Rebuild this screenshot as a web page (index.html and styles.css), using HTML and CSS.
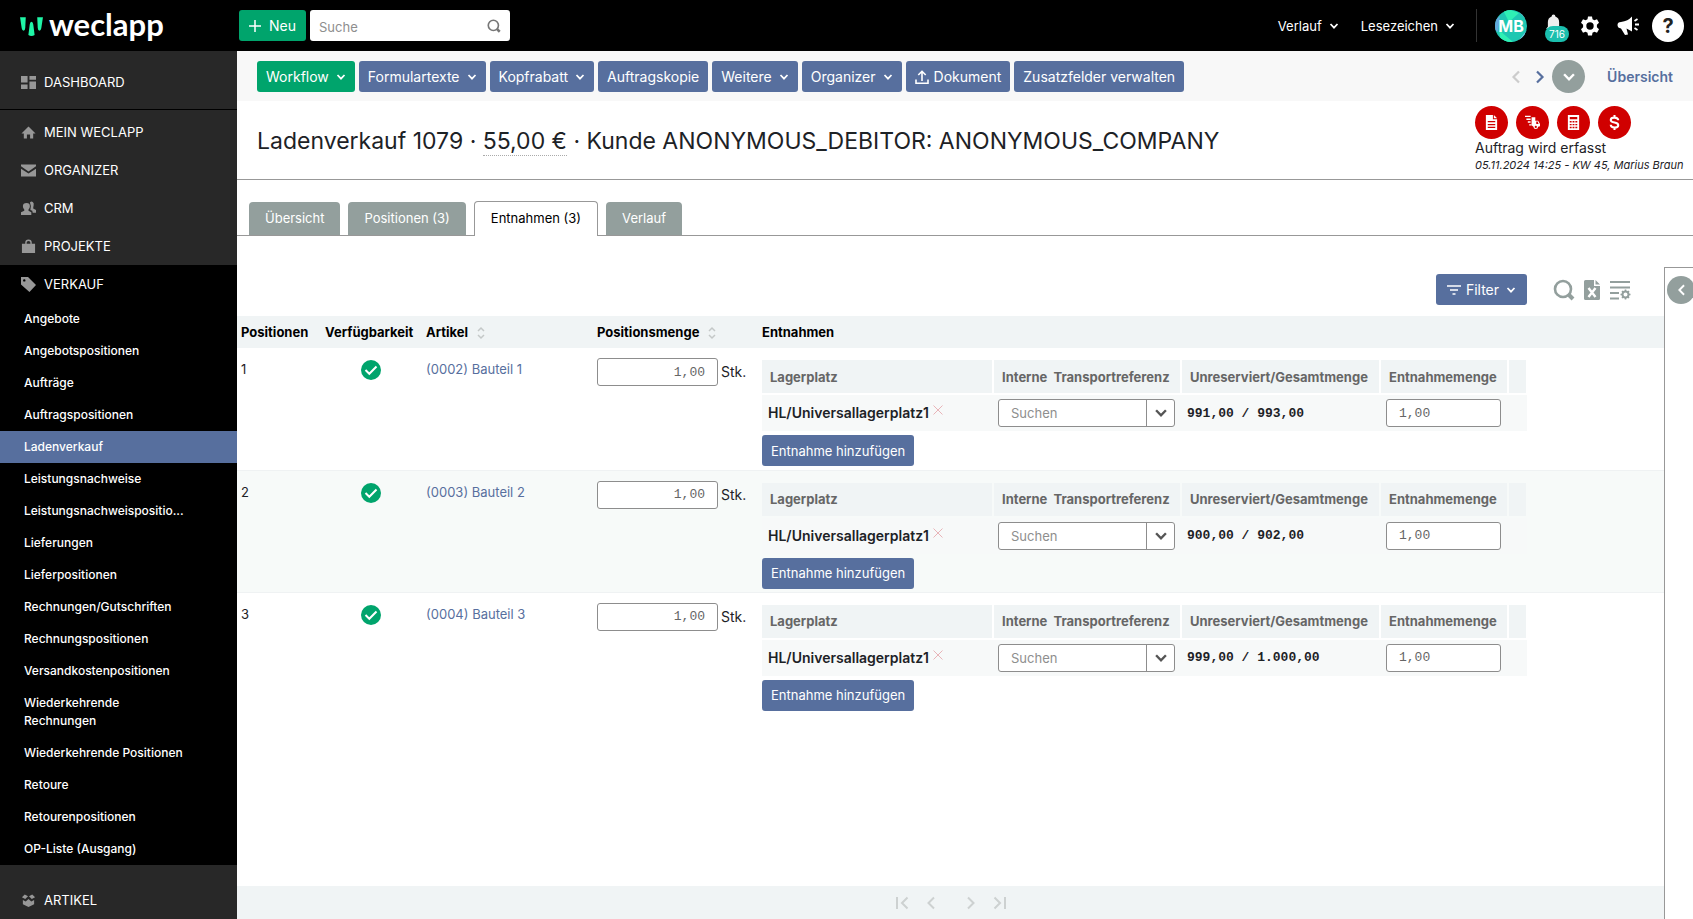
FILE: index.html
```html
<!DOCTYPE html>
<html lang="de">
<head>
<meta charset="utf-8">
<title>Ladenverkauf 1079 - weclapp</title>
<link rel="stylesheet" href="styles.css">
</head>
<body>
<svg class="sprite" aria-hidden="true">
  <symbol id="chev" viewBox="0 0 10 10"><path d="M1.5 3 5 6.700 8.500 3" fill="none" stroke="currentColor" stroke-width="1.700"/></symbol>
  <symbol id="chev-left" viewBox="0 0 10 14"><path d="M8 1.500 2.500 7 8 12.500" fill="none" stroke="currentColor" stroke-width="2.200"/></symbol>
  <symbol id="chev-right" viewBox="0 0 10 14"><path d="M2 1.500 7.500 7 2 12.500" fill="none" stroke="currentColor" stroke-width="2.200"/></symbol>
  <symbol id="sort" viewBox="0 0 10 14"><path d="M2 5 5 2 8 5M2 9l3 3 3-3" fill="none" stroke="currentColor" stroke-width="1.500"/></symbol>
  <symbol id="lens" viewBox="0 0 22 22"><circle cx="10" cy="10" r="8" fill="none" stroke="currentColor" stroke-width="2.600"/><path d="m15.500 15.500 4.500 4.500" stroke="currentColor" stroke-width="4"/></symbol>
  <symbol id="check" viewBox="0 0 20 20"><circle cx="10" cy="10" r="10" fill="#00a46c"/><path d="m4.500 10 3.800 3.800L15.500 6.500" fill="none" stroke="#fff" stroke-width="2"/></symbol>
  <symbol id="cross" viewBox="0 0 10 10"><path d="m.5.5 9 9m0-9-9 9" fill="none" stroke="currentColor" stroke-width="1"/></symbol>
</svg>

<header class="topbar">
  <a class="logo" href="#"><svg class="logo-mark" viewBox="0 0 24 20" aria-hidden="true"><path d="M1 2h5.500L6 12.500Q5.800 15 4.400 15T2.600 12.700ZM17.500 2H23l-1.600 10.700Q21 15 19.600 15T18 12.500ZM9 19l1.300-10Q10.600 6.500 12 6.500T13.700 9L15 19Q12 21 9 19Z" fill="#1ff5a6"/></svg><span>weclapp</span></a>
  <button class="btn btn-green btn-new"><svg class="ic12" viewBox="0 0 12 12" aria-hidden="true"><path d="M6 0v12M0 6h12" stroke="#fff" stroke-width="1.500"/></svg>Neu</button>
  <form class="search"><input type="search" placeholder="Suche" aria-label="Suche"><button type="button" aria-label="Suchen"><svg class="ic14" viewBox="0 0 22 22"><use href="#lens"/></svg></button></form>
  <nav class="topnav">
    <button>Verlauf<svg class="chev"><use href="#chev"/></svg></button>
    <button>Lesezeichen<svg class="chev"><use href="#chev"/></svg></button>
  </nav>
  <div class="tools">
    <button class="avatar" aria-label="Profil"><svg viewBox="0 0 32 32"><defs><clipPath id="round"><circle cx="16" cy="16" r="16"/></clipPath></defs><g clip-path="url(#round)"><path fill="#1fc7b2" d="M0 0h32v32H0z"/><path fill="#7cc6e8" d="M0 6 10 0H0zM22 0l10 10V0zM24 30l8-10v12h-8z"/><path fill="#2ff0b4" d="m8 0 8 0 8 3-10 9zM4 20l14 12H6z"/><path fill="#63a8dc" d="m0 10 5-4-2 16-3-2z"/></g></svg><span>MB</span></button>
    <button class="bell" aria-label="Benachrichtigungen"><svg viewBox="0 0 16 18"><path fill="#eee" d="M8 0a2 2 0 0 1 2 2q4 1.500 4 6v5l2 2H0l2-2V8q0-4.500 4-6a2 2 0 0 1 2-2z"/></svg><span>716</span></button>
    <button class="gear" aria-label="Einstellungen"><svg viewBox="0 0 20 20"><path fill="#fff" fill-rule="evenodd" d="M8 .5h4l.5 2.700 1.900 1.100L17 3.300l2 3.500-2.100 1.900v2.600L19 13.200l-2 3.500-2.600-1-1.900 1.100-.5 2.700H8l-.5-2.700-1.900-1.100-2.600 1-2-3.500 2.100-1.900V8.700L1 6.800l2-3.500 2.600 1 1.900-1.100zM10 6.300a3.700 3.700 0 1 0 0 7.400 3.700 3.700 0 0 0 0-7.400z"/></svg></button>
    <button class="horn" aria-label="Neuigkeiten"><svg viewBox="0 0 22 20"><path fill="#fff" d="M15 .5v15L9.500 12.500l1.500 6-3 .5L4 12.500Q.5 12 .5 9 .5 6 4 6 11 5 15 .5z"/><path d="m17.500 5 3-2m-2.500 5.500h4m-4.500 3.500 3 2" stroke="#fff" stroke-width="1.800"/></svg></button>
    <button class="help" aria-label="Hilfe">?</button>
  </div>
</header>

<div class="shell">
  <nav class="sidebar">
    <a class="main dash" href="#"><svg viewBox="0 0 16 16"><path d="M0 1h7v7H0zM9 1h7v4H9zM0 10h7v5H0zM9 7h7v8H9z"/></svg>DASHBOARD</a>
    <a class="main first" href="#"><svg viewBox="0 0 16 16"><path d="M8 1.500 15.500 9H13v5.500H9.700V10H6.300v4.500H3V9H.500z"/></svg>MEIN WECLAPP</a>
    <a class="main" href="#"><svg viewBox="0 0 16 16"><path d="M0 1.500h16v2L8 9 0 3.500zM0 6l8 5.200L16 6v8.500H0z"/></svg>ORGANIZER</a>
    <a class="main" href="#"><svg viewBox="0 0 16 16"><path d="M6 2q3.500 0 3.500 3.500 0 2-1.500 3.500v1.500l3 1.500v3H0v-3l3.500-1.500V9Q2 7.500 2 5.500 2 2 6 2zM9.500 1.500Q11 0 12.500 1 14 2 13.500 4.500T13 8l3 1.500v3h-3.500L12 10.500 10 9.500q1.500-4-.5-8z"/></svg>CRM</a>
    <a class="main" href="#"><svg viewBox="0 0 16 16"><path fill-rule="evenodd" d="M1 5h3.500V4a3.500 3.500 0 0 1 7 0v1H15v10H1zm5-1v1h4V4a2 2 0 0 0-4 0z"/></svg>PROJEKTE</a>
    <div class="open">
      <a class="main" href="#"><svg viewBox="0 0 16 16"><path fill-rule="evenodd" d="M0 0h7.500L16 8.500 9 16 0 8zm3.500 2.300a1.300 1.300 0 1 0 0 2.600 1.300 1.300 0 0 0 0-2.600z"/></svg>VERKAUF</a>
      <a class="sub" href="#">Angebote</a>
      <a class="sub" href="#">Angebotspositionen</a>
      <a class="sub" href="#">Aufträge</a>
      <a class="sub" href="#">Auftragspositionen</a>
      <a class="sub current" href="#">Ladenverkauf</a>
      <a class="sub" href="#">Leistungsnachweise</a>
      <a class="sub" href="#">Leistungsnachweispositio...</a>
      <a class="sub" href="#">Lieferungen</a>
      <a class="sub" href="#">Lieferpositionen</a>
      <a class="sub" href="#">Rechnungen/Gutschriften</a>
      <a class="sub" href="#">Rechnungspositionen</a>
      <a class="sub" href="#">Versandkostenpositionen</a>
      <a class="sub" href="#">Wiederkehrende<br>Rechnungen</a>
      <a class="sub" href="#">Wiederkehrende Positionen</a>
      <a class="sub" href="#">Retoure</a>
      <a class="sub" href="#">Retourenpositionen</a>
      <a class="sub" href="#">OP-Liste (Ausgang)</a>
    </div>
    <a class="main last" href="#"><svg viewBox="0 0 16 16"><path d="M1 4.500 4 1.500l3.500 2-3 3zM15 4.500l-3-3-3.500 2 3 3zM2 7.500l3 1.500 3-2.500L11 9l3-1.500V12l-6 3-6-3z"/></svg>ARTIKEL</a>
  </nav>

  <main class="page">
    <div class="toolbar">
      <button class="btn btn-green">Workflow<svg class="chev"><use href="#chev"/></svg></button>
      <button class="btn">Formulartexte<svg class="chev"><use href="#chev"/></svg></button>
      <button class="btn">Kopfrabatt<svg class="chev"><use href="#chev"/></svg></button>
      <button class="btn">Auftragskopie</button>
      <button class="btn">Weitere<svg class="chev"><use href="#chev"/></svg></button>
      <button class="btn">Organizer<svg class="chev"><use href="#chev"/></svg></button>
      <button class="btn"><svg class="ic14" viewBox="0 0 14 14" aria-hidden="true"><path d="M7 11V1.500M3.300 5 7 1.300 10.700 5M1 9.500v3.700h12V9.500" fill="none" stroke="#fff" stroke-width="1.600"/></svg>Dokument</button>
      <button class="btn">Zusatzfelder verwalten</button>
      <div class="pager-top">
        <button class="prev" aria-label="Zurück" disabled><svg class="arrow"><use href="#chev-left"/></svg></button>
        <button class="next" aria-label="Weiter"><svg class="arrow"><use href="#chev-right"/></svg></button>
        <button class="round-grey" aria-label="Mehr"><svg class="chev-big"><use href="#chev"/></svg></button>
        <a href="#">Übersicht</a>
      </div>
    </div>

    <section class="head">
      <h1>Ladenverkauf 1079 · <span class="amount">55,00 €</span> · Kunde ANONYMOUS_DEBITOR: ANONYMOUS_COMPANY</h1>
      <div class="status">
        <div class="badges">
          <span class="badge"><svg viewBox="0 0 16 16"><path fill="#fff" fill-rule="evenodd" d="M2 0h7.500v4.500H14V16H2zM4 6.500v1.300h8V6.500zm0 3v1.300h8V9.500zm0 3v1.300h8v-1.300zM10.500 0 14 3.500h-3.500z"/></svg></span>
          <span class="badge"><svg viewBox="0 0 16 16"><path d="M0 1.500h6M1.500 4.500H6M3 7.500h3M4.500 10.500H7" stroke="#fff" stroke-width="1.500"/><path fill="#fff" fill-rule="evenodd" d="M7 2.500h4V6h3l2 3.500V12l-2 .5a2.500 2.500 0 1 1-5 0L7 11zM12 7v2.500h2.500L13.500 7zm-.500 4.500a1.200 1.200 0 1 0 0 2.400 1.200 1.200 0 0 0 0-2.400z"/></svg></span>
          <span class="badge"><svg viewBox="0 0 16 16"><path fill="#fff" fill-rule="evenodd" d="M2 0h12v16H2zm2 2v2.500h8V2zm0 4.500V8h2V6.500zm3 0V8h2V6.500zm3 0V8h2V6.500zM4 9.500V11h2V9.500zm3 0V11h2V9.500zm3 0V11h2V9.500zm-6 3V14h2v-1.500zm3 0V14h2v-1.500zm3 0V14h2v-1.500z"/></svg></span>
          <span class="badge"><svg viewBox="0 0 16 16"><path d="M12 5.500Q12 2.800 8 2.800T4 5.300Q4 7.300 8 8t4 2.800q0 2.500-4 2.500t-4-2.800M8 0v3m0 10v3" fill="none" stroke="#fff" stroke-width="2.200"/></svg></span>
        </div>
        <div class="state">Auftrag wird erfasst</div>
        <div class="stamp">05.11.2024 14:25 - KW 45, Marius Braun</div>
      </div>
    </section>

    <nav class="tabs">
      <a href="#">Übersicht</a>
      <a href="#">Positionen (3)</a>
      <a class="active" href="#">Entnahmen (3)</a>
      <a href="#">Verlauf</a>
    </nav>

    <div class="work">
      <section class="list">
        <div class="list-tools">
          <button class="btn btn-filter"><svg class="ic14" viewBox="0 0 14 14" aria-hidden="true"><path d="M0 3h14M3 7h8M5.500 11h3" stroke="#fff" stroke-width="1.500"/></svg>Filter<svg class="chev"><use href="#chev"/></svg></button>
          <button class="ibtn" aria-label="Suchen"><svg viewBox="0 0 22 22"><use href="#lens"/></svg></button>
          <button class="ibtn" aria-label="Excel-Export"><svg viewBox="0 0 18 22"><path fill="currentColor" fill-rule="evenodd" d="M2.500 1H11v6h6v12.500q0 1.500-1.500 1.500h-13Q1 21 1 19.500v-17Q1 1 2.500 1zM12.500 1 17 5.500h-4.500z"/><path d="m5.500 9 7 9m0-9-7 9" stroke="#fff" stroke-width="2.400"/></svg></button>
          <button class="ibtn" aria-label="Spalten"><svg viewBox="0 0 22 22"><path d="M1 3h20M1 8.500h20M1 14h9M1 19.500h9" stroke="currentColor" stroke-width="2"/><circle cx="16.500" cy="15.500" r="3" fill="none" stroke="currentColor" stroke-width="2"/><path d="M16.500 10.500v2m0 6v2m-5-5h2m6 0h2m-8.500-3.500 1.200 1.200m4.600 4.600 1.200 1.200m0-7-1.200 1.200m-4.600 4.600-1.200 1.200" stroke="currentColor" stroke-width="1.600"/></svg></button>
        </div>
        <table class="grid">
          <colgroup><col class="c-pos"><col class="c-avail"><col class="c-art"><col class="c-qty"><col></colgroup>
          <thead>
            <tr><th>Positionen</th><th>Verfügbarkeit</th><th>Artikel<svg class="sort"><use href="#sort"/></svg></th><th>Positionsmenge<svg class="sort"><use href="#sort"/></svg></th><th>Entnahmen</th></tr>
          </thead>
          <tbody>
            <tr>
              <td>1</td>
              <td class="mid"><svg class="ok"><use href="#check"/></svg></td>
              <td><a href="#">(0002) Bauteil 1</a></td>
              <td class="qty"><label><input value="1,00">Stk.</label></td>
              <td class="picks">
                <table class="inner">
                  <thead><tr><th>Lagerplatz</th><th>Interne&nbsp; Transportreferenz</th><th>Unreserviert/Gesamtmenge</th><th>Entnahmemenge</th><th></th></tr></thead>
                  <tbody><tr><td>HL/Universallagerplatz1<button class="del" aria-label="Entfernen"><svg><use href="#cross"/></svg></button></td><td><div class="combo"><input placeholder="Suchen" aria-label="Transportreferenz"><button aria-label="Öffnen"><svg class="chev-big"><use href="#chev"/></svg></button></div></td><td class="num">991,00 / 993,00</td><td><input class="amt" value="1,00" aria-label="Entnahmemenge"></td><td></td></tr></tbody>
                </table>
                <button class="btn">Entnahme hinzufügen</button>
              </td>
            </tr>
            <tr class="alt">
              <td>2</td>
              <td class="mid"><svg class="ok"><use href="#check"/></svg></td>
              <td><a href="#">(0003) Bauteil 2</a></td>
              <td class="qty"><label><input value="1,00">Stk.</label></td>
              <td class="picks">
                <table class="inner">
                  <thead><tr><th>Lagerplatz</th><th>Interne&nbsp; Transportreferenz</th><th>Unreserviert/Gesamtmenge</th><th>Entnahmemenge</th><th></th></tr></thead>
                  <tbody><tr><td>HL/Universallagerplatz1<button class="del" aria-label="Entfernen"><svg><use href="#cross"/></svg></button></td><td><div class="combo"><input placeholder="Suchen" aria-label="Transportreferenz"><button aria-label="Öffnen"><svg class="chev-big"><use href="#chev"/></svg></button></div></td><td class="num">900,00 / 902,00</td><td><input class="amt" value="1,00" aria-label="Entnahmemenge"></td><td></td></tr></tbody>
                </table>
                <button class="btn">Entnahme hinzufügen</button>
              </td>
            </tr>
            <tr>
              <td>3</td>
              <td class="mid"><svg class="ok"><use href="#check"/></svg></td>
              <td><a href="#">(0004) Bauteil 3</a></td>
              <td class="qty"><label><input value="1,00">Stk.</label></td>
              <td class="picks">
                <table class="inner">
                  <thead><tr><th>Lagerplatz</th><th>Interne&nbsp; Transportreferenz</th><th>Unreserviert/Gesamtmenge</th><th>Entnahmemenge</th><th></th></tr></thead>
                  <tbody><tr><td>HL/Universallagerplatz1<button class="del" aria-label="Entfernen"><svg><use href="#cross"/></svg></button></td><td><div class="combo"><input placeholder="Suchen" aria-label="Transportreferenz"><button aria-label="Öffnen"><svg class="chev-big"><use href="#chev"/></svg></button></div></td><td class="num">999,00 / 1.000,00</td><td><input class="amt" value="1,00" aria-label="Entnahmemenge"></td><td></td></tr></tbody>
                </table>
                <button class="btn">Entnahme hinzufügen</button>
              </td>
            </tr>
          </tbody>
        </table>
        <footer class="pager">
          <button aria-label="Erste Seite" disabled><svg viewBox="0 0 14 14"><path d="M2 1v12M12.500 1.500 7 7l5.500 5.500" fill="none" stroke="currentColor" stroke-width="2"/></svg></button>
          <button aria-label="Vorherige Seite" disabled><svg viewBox="0 0 14 14"><path d="M10 1.500 4.500 7l5.500 5.500" fill="none" stroke="currentColor" stroke-width="2"/></svg></button>
          <button class="fwd" aria-label="Nächste Seite" disabled><svg viewBox="0 0 14 14"><path d="M4 1.500 9.500 7 4 12.500" fill="none" stroke="currentColor" stroke-width="2"/></svg></button>
          <button aria-label="Letzte Seite" disabled><svg viewBox="0 0 14 14"><path d="M12 1v12M1.500 1.500 7 7l-5.500 5.500" fill="none" stroke="currentColor" stroke-width="2"/></svg></button>
        </footer>
      </section>
      <aside class="drawer"><button aria-label="Seitenleiste öffnen"><svg class="arrow"><use href="#chev-left"/></svg></button></aside>
    </div>
  </main>
</div>
</body>
</html>
```
FILE: styles.css
```css
* { box-sizing: border-box; }
body {
  margin: 0;
  height: 100vh;
  display: flex;
  flex-direction: column;
  overflow: hidden;
  background: #fff;
  color: #1d2226;
  font: 14px/18px Inter, "Liberation Sans", sans-serif;
}
button, input { font: inherit; color: inherit; margin: 0; }
button { border: 0; background: none; padding: 0; display: flex; align-items: center; justify-content: center; }
a { color: inherit; text-decoration: none; }
svg { display: block; flex: none; }
.sprite { position: absolute; width: 0; height: 0; }
.chev { width: 10px; height: 10px; margin-left: 7px; }
.chev-big { width: 14px; height: 14px; }
.arrow { width: 10px; height: 14px; }
.ic12 { width: 12px; height: 12px; }
.ic14 { width: 14px; height: 14px; }

.btn {
  height: 31px;
  padding: 0 9px;
  border-radius: 3px;
  background: #576f9e;
  color: #fff;
  white-space: nowrap;
}
.btn .ic14 { margin-right: 5px; }
.btn-green { background: #00a46c; }

/* top bar */
.topbar { height: 51px; flex: none; display: flex; align-items: center; background: #000; color: #fff; padding-right: 9px; }
.logo { width: 239px; display: flex; align-items: center; gap: 5px; padding-left: 19px; font: 700 31px/32px Lato, sans-serif; }
.logo-mark { width: 25px; height: 21px; }
.logo span { padding-bottom: 4px; }
.btn-new { width: 67px; gap: 8px; }
.search { display: flex; width: 200px; height: 31px; margin-left: 4px; background: #fff; border-radius: 3px; color: #777; }
.search input { flex: 1; min-width: 0; border: 0; background: none; padding: 2px 0 0 9px; outline: 0; font-size: 13px; }
.search button { width: 32px; }
input::placeholder { color: #8e8e8e; opacity: 1; }
.topnav { margin-left: auto; display: flex; gap: 22px; font-size: 13px; }
.tools { display: flex; align-items: center; margin-left: 21px; padding-left: 18px; border-left: 1px solid #333; height: 33px; }
.avatar { position: relative; width: 32px; height: 32px; }
.avatar span { position: absolute; inset: 0; font: 700 16px/32px Inter, sans-serif; }
.bell { position: relative; width: 24px; height: 32px; margin-left: 18px; }
.bell svg { width: 15px; height: 18px; margin: 0 8px 6px 0; }
.bell span { position: absolute; left: 0; top: 16px; width: 24px; border-radius: 8px; background: #1bbfae; font-size: 10px; line-height: 16px; }
.gear { margin-left: 11px; }
.gear svg { width: 20px; height: 20px; }
.horn { margin-left: 17px; }
.horn svg { width: 22px; height: 20px; }
.help { width: 32px; height: 32px; margin-left: 13px; border-radius: 50%; background: #fff; color: #222; font-weight: 700; font-size: 20px; }

.shell { flex: 1; min-height: 0; display: flex; }

/* sidebar */
.sidebar { width: 237px; flex: none; overflow: hidden; background: #282828; color: #fff; }
.main { display: flex; align-items: center; gap: 8px; height: 38px; padding: 0 21px; font-size: 13px; }
.main svg { width: 15px; height: 15px; fill: #979797; }
.dash { height: 59px; padding-top: 4px; border-bottom: 1px solid #000; }
.first { margin-top: 3px; }
.last { margin-top: 16px; }
.open { background: #000; }
.sub { display: block; padding: 7px 24px; font-size: 12px; line-height: 18px; font-weight: 500; white-space: nowrap; }
.current { background: #576f9e; }

/* page head */
.page { flex: 1; min-width: 0; display: flex; flex-direction: column; }
.toolbar { display: flex; align-items: center; gap: 4px; height: 50px; flex: none; padding: 1px 20px 0 20px; background: #f8f8f8; }
.pager-top { margin-left: auto; display: flex; align-items: center; color: #576f9e; font-weight: 600; }
.prev { color: #ccc; margin-right: 14px; }
.next { margin-right: 7px; }
.round-grey { width: 33px; height: 33px; margin-right: 22px; border-radius: 50%; background: #939f9d; color: #fff; }
.head { display: flex; justify-content: space-between; align-items: center; height: 79px; flex: none; padding: 0 8px 0 20px; border-bottom: 1px solid #989898; }
h1 { margin: 0; padding-top: 2px; font: 400 23px/30px Inter, sans-serif; white-space: nowrap; }
.amount { border-bottom: 1px dotted #aaa; }
.status { width: 210px; white-space: nowrap; padding-bottom: 2px; }
.badges { display: flex; gap: 8px; }
.badge { width: 33px; height: 33px; border-radius: 50%; background: #d00000; display: flex; align-items: center; justify-content: center; }
.badge svg { width: 15px; height: 15px; }
.stamp { font-size: 11px; font-style: italic; line-height: 16px; }

/* tabs */
.tabs { display: flex; gap: 8px; height: 56px; flex: none; padding: 0 12px; align-items: flex-end; border-bottom: 1px solid #989898; font-size: 13px; }
.tabs a { height: 33px; padding: 0 16px; line-height: 33px; border-radius: 4px 4px 0 0; background: #939f9d; color: #fff; }
.tabs .active { height: 35px; margin-bottom: -1px; border: 1px solid #989898; border-bottom: 0; background: #fff; color: #000; }

/* list */
.work { flex: 1; min-height: 0; display: flex; }
.list { flex: 1; min-width: 0; display: flex; flex-direction: column; }
.list-tools { display: flex; justify-content: flex-end; align-items: flex-end; height: 80px; flex: none; padding: 0 30px 11px 0; color: #939f9d; }
.btn-filter { width: 91px; margin-right: 23px; }
.ibtn { height: 31px; width: 28px; }
.ibtn svg { height: 22px; width: 22px; }
table { border-collapse: collapse; }
.grid { width: 100%; table-layout: fixed; }
.c-pos { width: 84px; }
.c-avail { width: 101px; }
.c-art { width: 171px; }
.c-qty { width: 165px; }
th { text-align: left; white-space: nowrap; }
.grid > thead th { height: 32px; padding: 0 4px; background: #f0f4f5; color: #000; font-size: 13px; font-weight: 700; }
.sort { display: inline-block; width: 10px; height: 14px; margin-left: 8px; vertical-align: -3px; color: #c4c8c8; }
.grid > tbody > tr { height: 122px; border-bottom: 1px solid #eff2f3; }
.grid > tbody > tr:last-child { border-bottom: 0; }
.grid > tbody > tr > td { vertical-align: top; padding: 12px 4px 0; font-size: 13px; }
.alt { background: #f7faf9; }
.grid td a { color: #576f9e; }
.ok { width: 20px; height: 20px; margin: 0 auto; }
.grid > tbody > tr > .qty { padding-top: 10px; font-size: 14px; }
.grid > tbody > tr > .mid { padding-right: 6px; }
.qty label { display: flex; align-items: center; gap: 3px; }
.qty input, .amt { height: 28px; border: 1px solid #8d8d8d; border-radius: 3px; background: #fff; color: #666; font: 13px "Liberation Mono", monospace; padding: 0 12px; }
.qty input { width: 121px; text-align: right; }
.amt { display: block; width: 115px; }
.grid > tbody > tr > .picks { padding: 12px 4px 3px; }
.inner { margin-bottom: 4px; table-layout: fixed; width: 765px; }
.inner th { height: 34px; padding: 0 8px; border: solid #fff; border-width: 0 2px 2px 0; background: #f0f4f5; color: #666; font-size: 13px; font-weight: 700; }
.inner td { height: 37px; padding: 0 6px; background: #f7f9f9; font-size: 13px; font-weight: 600; }
.inner td:first-child { font-size: 14px; }
.alt .inner th { border-color: #f7faf9; }
.inner th:nth-child(1) { width: 231px; }
.inner th:nth-child(2) { width: 188px; }
.inner th:nth-child(3) { width: 199px; }
.inner th:nth-child(4) { width: 128px; }
.inner th:nth-child(5) { width: 19px; }
.inner .num { font: 700 13px "Liberation Mono", monospace; }
.del { display: inline-flex; margin-left: 4px; vertical-align: 3px; color: #e8b4b8; }
.del svg { width: 10px; height: 10px; }
.combo { display: flex; width: 177px; height: 28px; margin-left: -1px; border: 1px solid #8d8d8d; border-radius: 3px; background: #fff; color: #555; }
.combo input { flex: 1; min-width: 0; border: 0; background: none; padding: 0 12px; outline: 0; font-weight: 400; }
.combo button { width: 28px; border-left: 1px solid #8d8d8d; }
.pager { display: flex; justify-content: center; align-items: center; height: 33px; flex: none; margin-top: auto; background: #f0f4f5; color: #cdd1d1; gap: 15px; }
.pager svg { width: 14px; height: 14px; }
.fwd { margin-left: 11px; }

.drawer { width: 29px; flex: none; margin-top: 31px; padding: 8px 0 0 2px; border: solid #989898; border-width: 1px 0 0 1px; overflow: hidden; }
.drawer button { width: 28px; height: 28px; border-radius: 50%; background: #939f9d; color: #fff; }
.drawer .arrow { width: 9px; height: 12px; }
```
